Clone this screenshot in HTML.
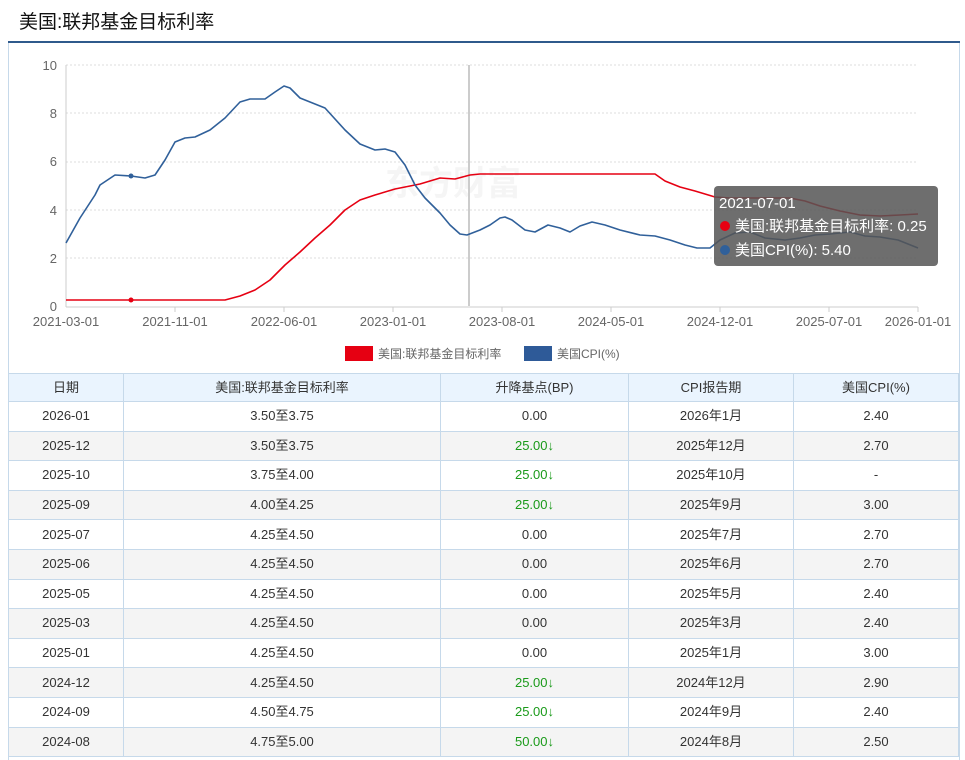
<!DOCTYPE html>
<html><head><meta charset="utf-8"><style>
*{margin:0;padding:0;box-sizing:border-box}
body{width:965px;height:760px;overflow:hidden;background:#fff;font-family:"Liberation Sans","Noto Sans CJK SC",sans-serif;color:#333;position:relative}
.title{position:absolute;left:19px;top:7px;font-size:19px;color:#111}
.topline{position:absolute;left:8px;top:41px;width:952px;height:2px;background:#2f5a8c}
.box{position:absolute;left:8px;top:43px;width:952px;height:717px;border-left:1px solid #c6d9ea;border-right:1px solid #c6d9ea}
svg{position:absolute;left:0;top:0}
table{position:absolute;left:8px;top:373px;width:951px;border-collapse:collapse;font-size:13px;table-layout:fixed}
td,th{border:1px solid #c6d9ea;text-align:center;font-weight:normal;height:29.6px;line-height:16px;vertical-align:middle;color:#333;padding:0}
th{background:#eaf4fe;height:28px}
tr:nth-child(odd) td{background:#f4f4f4}
.g{color:#1a9a1a}
</style></head><body>
<div class="title">美国:联邦基金目标利率</div>
<div class="topline"></div>
<div class="box"></div>
<svg width="965" height="372" font-family="Liberation Sans, Noto Sans CJK SC, sans-serif">
<g stroke="#ddd" stroke-dasharray="2,2">
<line x1="66" y1="65" x2="918" y2="65"/><line x1="66" y1="113" x2="918" y2="113"/><line x1="66" y1="162" x2="918" y2="162"/><line x1="66" y1="210" x2="918" y2="210"/><line x1="66" y1="258" x2="918" y2="258"/>
</g>
<line x1="66" y1="65" x2="66" y2="307" stroke="#ccc"/>
<line x1="66" y1="307" x2="918" y2="307" stroke="#ccc"/>
<g stroke="#ccc"><line x1="175" y1="307" x2="175" y2="312"/><line x1="284" y1="307" x2="284" y2="312"/><line x1="393" y1="307" x2="393" y2="312"/><line x1="502" y1="307" x2="502" y2="312"/><line x1="611" y1="307" x2="611" y2="312"/><line x1="720" y1="307" x2="720" y2="312"/><line x1="829" y1="307" x2="829" y2="312"/><line x1="918" y1="307" x2="918" y2="312"/></g>
<g fill="#666" font-size="13" text-anchor="end"><text x="57" y="70">10</text><text x="57" y="118">8</text><text x="57" y="166">6</text><text x="57" y="215">4</text><text x="57" y="263">2</text><text x="57" y="311">0</text></g>
<g fill="#666" font-size="13" text-anchor="middle"><text x="66" y="326">2021-03-01</text><text x="175" y="326">2021-11-01</text><text x="284" y="326">2022-06-01</text><text x="393" y="326">2023-01-01</text><text x="502" y="326">2023-08-01</text><text x="611" y="326">2024-05-01</text><text x="720" y="326">2024-12-01</text><text x="829" y="326">2025-07-01</text><text x="918" y="326">2026-01-01</text></g>
<text x="385" y="195" font-size="34" font-weight="bold" fill="#f5f5f5">东方财富</text>
<line x1="469" y1="65" x2="469" y2="306" stroke="#ccc" stroke-width="2"/>
<polyline fill="none" stroke="#e60012" stroke-width="1.6" stroke-linejoin="round" points="66,300 225,300 240,296 255,290 270,280 285,265 300,252 315,238 330,225 345,210 360,200 375,195 395,189 420,184 440,178 455,179 470,175 480,174 655,174 665,181 680,187 695,191 715,197 730,198 790,198 805,201 820,206 840,211 860,215 880,216 900,215 918,214"/>
<polyline fill="none" stroke="#30609a" stroke-width="1.6" stroke-linejoin="round" points="66,243 80,218 95,195 100,185 115,175 131,176 145,178 155,175 165,160 175,142 185,138 195,137 210,130 225,118 240,102 250,99 265,99 275,92 284,86 290,88 300,98 310,102 325,108 345,130 360,144 375,150 385,149 395,152 405,165 415,185 425,198 440,213 450,225 460,234 467,235 480,230 490,225 500,218 505,217 512,220 525,230 535,232 548,225 560,228 570,232 580,226 592,222 605,225 620,230 640,235 655,236 670,240 685,245 697,248 710,248 720,240 735,233 750,232 765,238 785,240 800,238 815,235 830,234 850,232 865,236 880,237 898,240 918,248"/>
<circle cx="131" cy="300" r="2.5" fill="#e60012"/><circle cx="131" cy="176" r="2.5" fill="#30609a"/>
<rect x="714" y="186" width="224" height="80" rx="4" fill="#555" fill-opacity="0.85"/>
<g fill="#fff" font-size="15"><text x="719" y="208">2021-07-01</text><text x="735" y="231">美国:联邦基金目标利率: 0.25</text><text x="735" y="255">美国CPI(%): 5.40</text></g>
<circle cx="725" cy="226" r="5" fill="#e60012"/><circle cx="725" cy="250" r="5" fill="#30609a"/>
<rect x="345" y="346" width="28" height="15" fill="#e60012"/><text x="378" y="358" font-size="12" fill="#666">美国:联邦基金目标利率</text>
<rect x="524" y="346" width="28" height="15" fill="#2e5a98"/><text x="557" y="358" font-size="12" fill="#666">美国CPI(%)</text>
</svg>
<table>
<tr><th style="width:115px">日期</th><th style="width:317px">美国:联邦基金目标利率</th><th style="width:188px">升降基点(BP)</th><th style="width:165px">CPI报告期</th><th>美国CPI(%)</th></tr>
<tr><td>2026-01</td><td>3.50至3.75</td><td>0.00</td><td>2026年1月</td><td>2.40</td></tr>
<tr><td>2025-12</td><td>3.50至3.75</td><td class="g">25.00↓</td><td>2025年12月</td><td>2.70</td></tr>
<tr><td>2025-10</td><td>3.75至4.00</td><td class="g">25.00↓</td><td>2025年10月</td><td>-</td></tr>
<tr><td>2025-09</td><td>4.00至4.25</td><td class="g">25.00↓</td><td>2025年9月</td><td>3.00</td></tr>
<tr><td>2025-07</td><td>4.25至4.50</td><td>0.00</td><td>2025年7月</td><td>2.70</td></tr>
<tr><td>2025-06</td><td>4.25至4.50</td><td>0.00</td><td>2025年6月</td><td>2.70</td></tr>
<tr><td>2025-05</td><td>4.25至4.50</td><td>0.00</td><td>2025年5月</td><td>2.40</td></tr>
<tr><td>2025-03</td><td>4.25至4.50</td><td>0.00</td><td>2025年3月</td><td>2.40</td></tr>
<tr><td>2025-01</td><td>4.25至4.50</td><td>0.00</td><td>2025年1月</td><td>3.00</td></tr>
<tr><td>2024-12</td><td>4.25至4.50</td><td class="g">25.00↓</td><td>2024年12月</td><td>2.90</td></tr>
<tr><td>2024-09</td><td>4.50至4.75</td><td class="g">25.00↓</td><td>2024年9月</td><td>2.40</td></tr>
<tr><td>2024-08</td><td>4.75至5.00</td><td class="g">50.00↓</td><td>2024年8月</td><td>2.50</td></tr>
</table>
</body></html>
